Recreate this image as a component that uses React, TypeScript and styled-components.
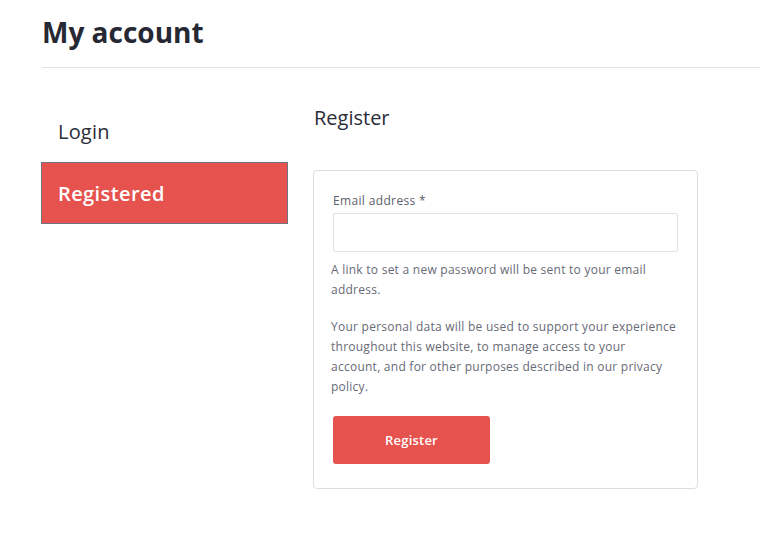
import styled, { createGlobalStyle } from "styled-components";

const GlobalStyle = createGlobalStyle`
  html, body {
    margin: 0;
    padding: 0;
    background: #ffffff;
    font-family: "Open Sans", "Noto Sans", sans-serif;
    overflow: hidden;
  }
`;

const Page = styled.div`
  padding: 14px 0 0 42px;
  width: 760px;
  box-sizing: border-box;
`;

const Title = styled.h1`
  margin: 0;
  font-size: 28px;
  font-weight: 700;
  color: #262833;
  line-height: 36px;
`;

const Divider = styled.hr`
  margin: 17px 0 0;
  border: none;
  border-top: 1px solid #e4e4e6;
`;

const Content = styled.div`
  display: flex;
  gap: 25px;
  margin-top: 32px;
  margin-left: -1px;
`;

const Nav = styled.nav`
  width: 247px;
  display: flex;
  flex-direction: column;
`;

const Tab = styled.div<{ $active?: boolean }>`
  height: 62px;
  box-sizing: border-box;
  display: flex;
  align-items: center;
  padding-left: 16px;
  font-size: 20px;
  letter-spacing: ${(p) => (p.$active ? "0.4px" : "0.2px")};
  font-weight: ${(p) => (p.$active ? 600 : 500)};
  color: ${(p) => (p.$active ? "#ffffff" : "#2b2d38")};
  background: ${(p) => (p.$active ? "#e6524d" : "transparent")};
  border: 1px solid ${(p) => (p.$active ? "#6f7380" : "transparent")};
`;

const Main = styled.section`
  display: flex;
  flex-direction: column;
`;

const Heading = styled.h2`
  margin: 4px 0 0 1px;
  font-size: 20px;
  font-weight: 500;
  color: #2b2d38;
  line-height: 28px;
`;

const Card = styled.div`
  margin-top: 38px;
  width: 385px;
  box-sizing: border-box;
  border: 1px solid #dcdce2;
  border-radius: 4px;
  padding: 21px 19px 24px 17px;
`;

const Label = styled.label`
  display: block;
  margin-left: 2px;
  font-size: 12px;
  letter-spacing: 0.35px;
  color: #5b5e6a;
  line-height: 18px;
`;

const Input = styled.input`
  display: block;
  margin: 3px 0 0 2px;
  width: 345px;
  height: 39px;
  box-sizing: border-box;
  border: 1px solid #e2e2e8;
  border-radius: 2px;
  outline: none;
`;

const Text = styled.p`
  margin: 8px 0 0;
  font-size: 12px;
  letter-spacing: 0.25px;
  line-height: 20px;
  color: #676a75;

  & + & {
    margin-top: 17px;
  }
`;

const Button = styled.button`
  margin: 19px 0 0 2px;
  width: 157px;
  height: 48px;
  border: none;
  border-radius: 3px;
  background: #e6524d;
  color: #ffffff;
  font-family: inherit;
  font-size: 13px;
  font-weight: 600;
  letter-spacing: 0.2px;
  cursor: pointer;
`;

export default function App() {
  return (
    <Page>
      <GlobalStyle />
      <Title>My account</Title>
      <Divider />
      <Content>
        <Nav>
          <Tab>Login</Tab>
          <Tab $active>Registered</Tab>
        </Nav>
        <Main>
          <Heading>Register</Heading>
          <Card>
            <Label>Email address *</Label>
            <Input type="email" />
            <Text>A link to set a new password will be sent to your email address.</Text>
            <Text>
              Your personal data will be used to support your experience throughout this website, to
              manage access to your account, and for other purposes described in our privacy policy.
            </Text>
            <Button>Register</Button>
          </Card>
        </Main>
      </Content>
    </Page>
  );
}
